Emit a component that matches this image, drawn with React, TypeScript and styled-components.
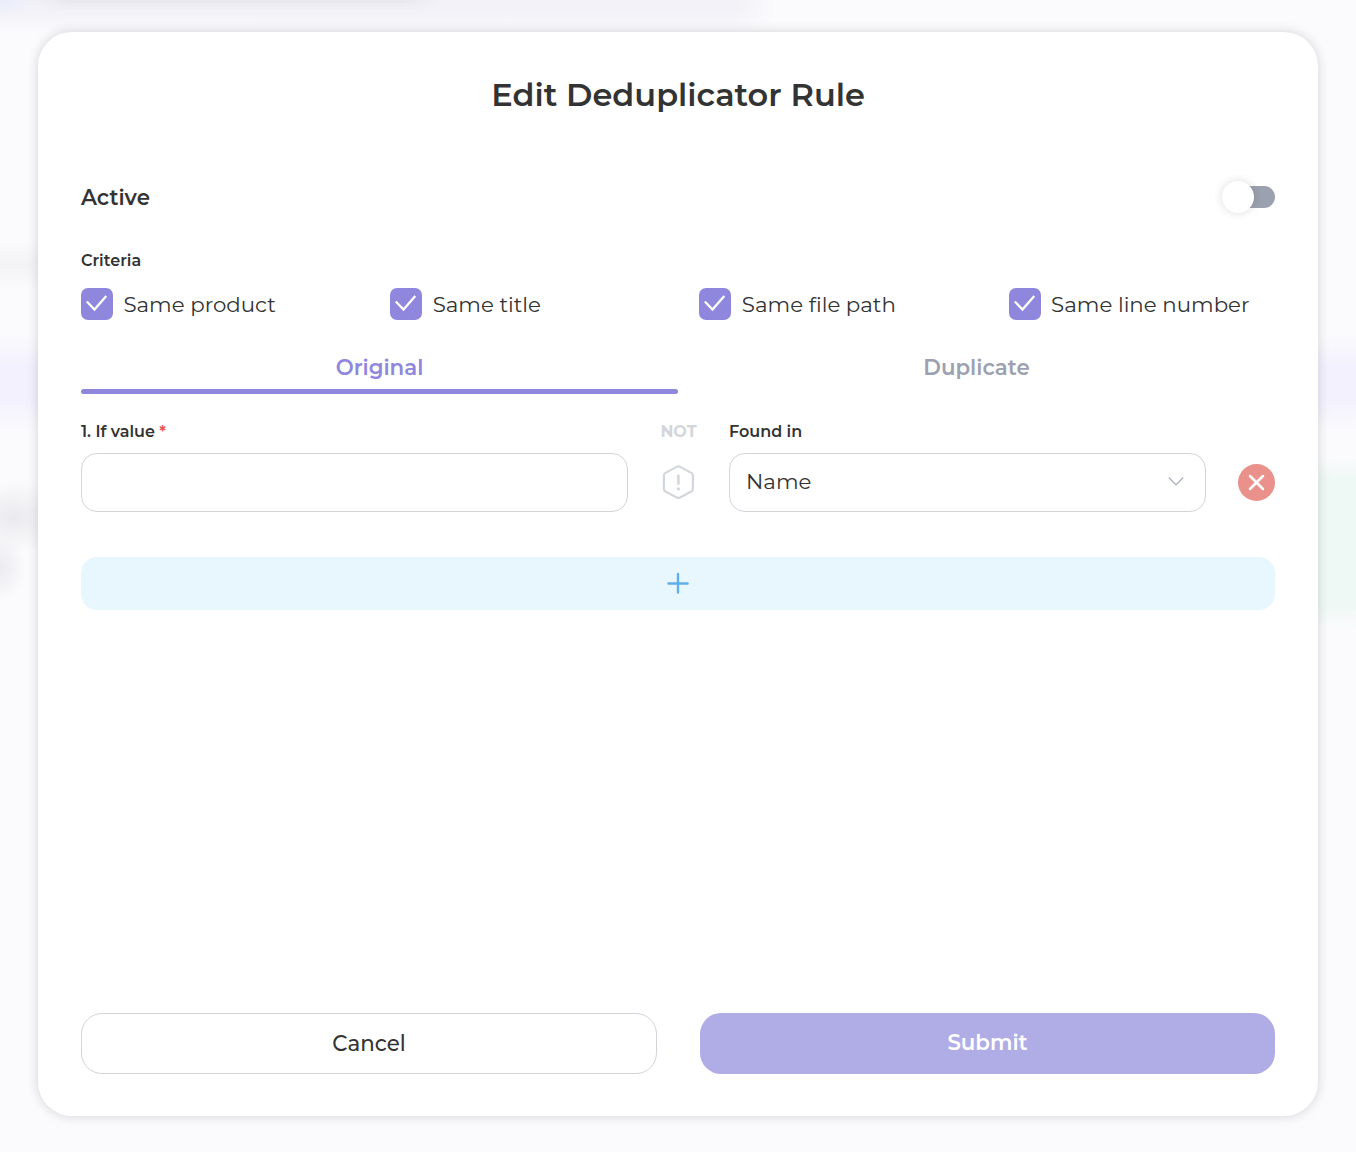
import React, { useState } from "react";
import styled, { createGlobalStyle } from "styled-components";

const GlobalStyle = createGlobalStyle`
  *, *::before, *::after { box-sizing: border-box; }
  body {
    margin: 0;
    color: #333333;
    font-family: Montserrat, Inter, "Liberation Sans", sans-serif;
    -webkit-font-smoothing: antialiased;
  }
  button, input { font: inherit; color: inherit; }
`;

const Backdrop = styled.div`
  width: 100%;
  height: 1152px;
  overflow: hidden;
  padding: 32px 38px 36px;
  background:
    radial-gradient(ellipse 40px 16px at 0 0, #e9edfb, transparent),
    linear-gradient(90deg, #fbfbfd00 0, #fbfbfd00 735px, #fbfbfd 775px) 0 0 / 100% 32px no-repeat,
    linear-gradient(90deg, #f3f2f800 440px, #f3f2f8 441px) 0 0 / 0 0 no-repeat,
    linear-gradient(90deg, transparent, rgba(224, 222, 229, 0.5) 10%, rgba(224, 222, 229, 0.5) 90%, transparent) 30px 0 / 410px 3px no-repeat,
    linear-gradient(90deg, transparent, rgba(226, 224, 231, 0.35) 10%, rgba(226, 224, 231, 0.35) 90%, transparent) 30px 3px / 410px 3px no-repeat,
    linear-gradient(90deg, transparent, rgba(228, 226, 233, 0.2) 10%, rgba(228, 226, 233, 0.2) 90%, transparent) 30px 6px / 410px 4px no-repeat,
    linear-gradient(#f2f1f7 0, #f3f2f8 12px, #fafafc 32px) 0 0 / 775px 32px no-repeat,
    linear-gradient(transparent, #f4f4f7 45%, #f4f4f7 55%, transparent) 0 240px / 60px 50px no-repeat,
    radial-gradient(ellipse 50px 36px at 14px 517px, #eaeaee, transparent),
    radial-gradient(ellipse 26px 34px at 0 567px, #ebebf0, transparent),
    linear-gradient(transparent, #eef8f4 12%, #eef8f4 85%, transparent) 100% 458px / 60px 172px no-repeat,
    linear-gradient(transparent, #f3f1fd 32%, #f3f1fd 68%, transparent) 0 335px / 100% 96px no-repeat,
    #fbfbfd;
`;

const Modal = styled.section`
  display: flex;
  flex-direction: column;
  height: 1084px;
  padding: 43px 43px 42px;
  border-radius: 34px;
  background: #ffffff;
  box-shadow: 0 0 12px rgba(0, 0, 0, 0.16);
`;

const Text = styled.span`
  white-space: nowrap;
`;

const Title = styled.h1`
  margin: 0;
  height: 40px;
  font-size: 32px;
  line-height: 40px;
  font-weight: 600;
  text-align: center;
`;

const ActiveRow = styled.div`
  display: flex;
  align-items: center;
  justify-content: space-between;
  height: 34px;
  margin-top: 65px;
  font-size: 21.333px;
  line-height: 26px;
  font-weight: 600;
`;

const Toggle = styled.button`
  display: flex;
  align-items: center;
  width: 48px;
  height: 22px;
  padding: 0;
  border: 0;
  border-radius: 11px;
  background: #9ca1af;
`;

const Knob = styled.span<{ $on: boolean }>`
  flex: none;
  width: 32px;
  height: 32px;
  margin-left: ${(p) => (p.$on ? 21 : -5)}px;
  border-radius: 50%;
  background: #ffffff;
  box-shadow: 0 0 10px rgba(0, 0, 0, 0.14);
`;

const SmallLabel = styled.div<{ $muted?: boolean }>`
  height: 20px;
  font-size: 16px;
  line-height: 20px;
  font-weight: ${(p) => (p.$muted ? 700 : 600)};
  white-space: nowrap;
  color: ${(p) => (p.$muted ? "#d3d6db" : "#333333")};
`;

const Criteria = styled.div`
  display: flex;
  flex-direction: column;
  gap: 17px;
  margin-top: 37px;
`;

const CheckGrid = styled.div`
  display: grid;
  grid-template-columns: repeat(4, 266.3px);
  justify-content: space-between;
`;

const CheckItem = styled.label`
  display: flex;
  align-items: center;
  gap: 10.4px;
  height: 32px;
  font-size: 21.333px;
  line-height: 26px;
`;

const CheckBox = styled.span`
  display: grid;
  place-items: center;
  flex: none;
  width: 32px;
  height: 32px;
  border-radius: 7px;
  background: #8f87dd;
`;

const Tabs = styled.div`
  display: grid;
  grid-template-columns: 1fr 1fr;
  margin-top: 32px;
`;

const Tab = styled.button<{ $active: boolean }>`
  display: flex;
  flex-direction: column;
  align-items: center;
  justify-content: space-between;
  height: 42px;
  padding: 0;
  border: 0;
  background: none;
  color: ${(p) => (p.$active ? "#8f87dd" : "#9ca1af")};
  font-size: 21.333px;
  line-height: 30px;
  font-weight: 600;

  &::after {
    content: "";
    width: 100%;
    height: 5px;
    border-radius: 3px;
    background: ${(p) => (p.$active ? "#8f87dd" : "transparent")};
  }
`;

const RuleRow = styled.div`
  display: grid;
  grid-template-columns: 547px 37px 477px 37px;
  justify-content: space-between;
  margin-top: 28px;
`;

const Field = styled.div<{ $center?: boolean }>`
  display: flex;
  flex-direction: column;
  align-items: ${(p) => (p.$center ? "center" : "stretch")};
  justify-content: flex-end;
  gap: 11px;
`;

const Asterisk = styled.span`
  color: #e8524f;
`;

const Input = styled.input`
  width: 100%;
  height: 59px;
  padding: 0 16px;
  border: 1px solid #d3d5da;
  border-radius: 16px;
  outline: 0;
  background: #ffffff;
  font-size: 21.333px;
`;

const Select = styled.button`
  display: flex;
  align-items: center;
  justify-content: space-between;
  height: 59px;
  padding: 0 21px 3px 16px;
  border: 1px solid #d3d5da;
  border-radius: 16px;
  background: #ffffff;
  font-size: 21.333px;
  line-height: 26px;
`;

const IconSlot = styled.div`
  display: grid;
  place-items: center;
  height: 59px;
`;

const RemoveButton = styled.button`
  display: grid;
  place-items: center;
  width: 37px;
  height: 37px;
  padding: 0;
  border: 0;
  border-radius: 50%;
  background: #ea918c;
`;

const AddButton = styled.button`
  display: grid;
  place-items: center;
  flex: none;
  height: 53px;
  margin-top: 45px;
  padding: 0 0 1px;
  border: 0;
  border-radius: 16px;
  background: #e8f7fe;
`;

const Footer = styled.footer`
  display: grid;
  grid-template-columns: 576px 575px;
  justify-content: space-between;
  margin-top: auto;
`;

const ActionButton = styled.button<{ $primary?: boolean }>`
  height: 61px;
  padding: ${(p) => (p.$primary ? "0 0 4px" : "0 0 2px")};
  border: ${(p) => (p.$primary ? "0" : "1px solid #d3d5da")};
  border-radius: 21px;
  background: ${(p) => (p.$primary ? "#b0ade6" : "#ffffff")};
  color: ${(p) => (p.$primary ? "#ffffff" : "#333333")};
  font-size: 21.333px;
  line-height: 26px;
  font-weight: ${(p) => (p.$primary ? 600 : 500)};
`;

const CheckMark = () => (
  <svg width="32" height="32" viewBox="0 0 32 32" fill="none" stroke="#fff" strokeWidth="2.3">
    <path d="M5.800 13.500l7.700 8L25.300 8" />
  </svg>
);

const NotIcon = () => (
  <svg width="37" height="37" viewBox="0 0 37 37" fill="none" stroke="#d3d6db" strokeWidth="2.200" strokeLinecap="round" strokeLinejoin="round">
    <path d="M16.700 2.900Q18.400 2 20.100 2.900L31.300 8.900Q32.900 9.800 32.900 11.600V24.800Q32.900 26.600 31.300 27.500L20.100 33.500Q18.400 34.400 16.700 33.500L5.500 27.500Q3.900 26.600 3.900 24.800V11.600Q3.900 9.800 5.500 8.900Z" />
    <path d="M18.400 11.800V19.800" strokeWidth="2.600" />
    <circle cx="18.400" cy="24.900" r="1.600" fill="#d3d6db" stroke="none" />
  </svg>
);

const Chevron = () => (
  <svg width="16" height="10" viewBox="0 0 16 10" fill="none" stroke="#a9adb8" strokeWidth="1.200">
    <path d="M.8 1.500L8 8.900L15.200 1.500" />
  </svg>
);

const Cross = () => (
  <svg width="17" height="17" viewBox="0 0 17 17" fill="none" stroke="#fff" strokeWidth="2.500" strokeLinecap="round">
    <path d="M2 2l13 13M15 2L2 15" />
  </svg>
);

const Plus = () => (
  <svg width="22" height="22" viewBox="0 0 22 22" fill="none" stroke="#5fb0ea" strokeWidth="2.400" strokeLinecap="round">
    <path d="M11 1.900V20.600M1.400 11.500H20.600" />
  </svg>
);

const criteria = ["Same product", "Same title", "Same file path", "Same line number"];

export default function App() {
  const [active, setActive] = useState(false);
  const [tab, setTab] = useState("Original");

  return (
    <>
      <GlobalStyle />
      <Backdrop>
        <Modal>
          <Title>Edit Deduplicator Rule</Title>
          <ActiveRow>
            <Text>Active</Text>
            <Toggle aria-label="Active" onClick={() => setActive(!active)}>
              <Knob $on={active} />
            </Toggle>
          </ActiveRow>
          <Criteria>
            <SmallLabel>Criteria</SmallLabel>
            <CheckGrid>
              {criteria.map((label) => (
                <CheckItem key={label}>
                  <CheckBox><CheckMark /></CheckBox>
                  <Text>{label}</Text>
                </CheckItem>
              ))}
            </CheckGrid>
          </Criteria>
          <Tabs>
            {["Original", "Duplicate"].map((name) => (
              <Tab key={name} $active={tab === name} onClick={() => setTab(name)}>
                <Text>{name}</Text>
              </Tab>
            ))}
          </Tabs>
          <RuleRow>
            <Field>
              <SmallLabel>1. If value <Asterisk>*</Asterisk></SmallLabel>
              <Input aria-label="If value" />
            </Field>
            <Field $center>
              <SmallLabel $muted>NOT</SmallLabel>
              <IconSlot><NotIcon /></IconSlot>
            </Field>
            <Field>
              <SmallLabel>Found in</SmallLabel>
              <Select><Text>Name</Text><Chevron /></Select>
            </Field>
            <Field>
              <IconSlot>
                <RemoveButton aria-label="Remove"><Cross /></RemoveButton>
              </IconSlot>
            </Field>
          </RuleRow>
          <AddButton aria-label="Add"><Plus /></AddButton>
          <Footer>
            <ActionButton>Cancel</ActionButton>
            <ActionButton $primary>Submit</ActionButton>
          </Footer>
        </Modal>
      </Backdrop>
    </>
  );
}
